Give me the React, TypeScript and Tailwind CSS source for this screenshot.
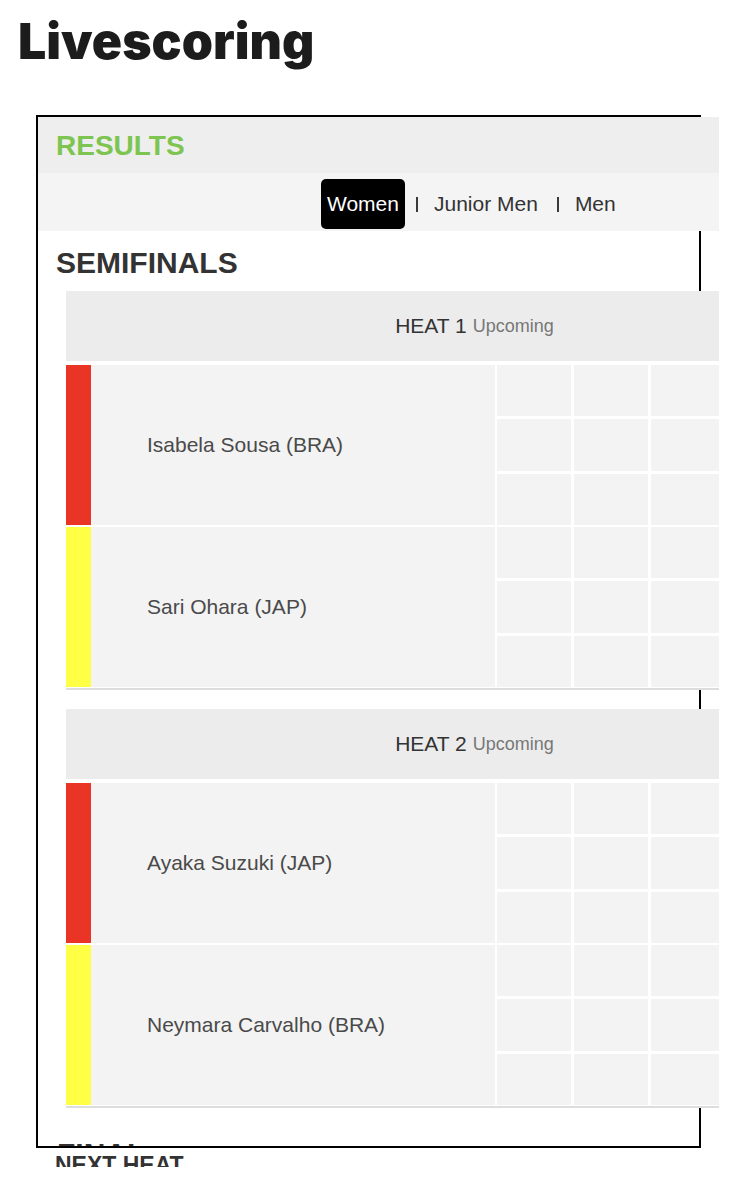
import React from "react";

type Rider = { name: string; color: string };
type Heat = { n: number; riders: Rider[] };

const heats: Heat[] = [
  {
    n: 1,
    riders: [
      { name: "Isabela Sousa (BRA)", color: "bg-[#ea3526]" },
      { name: "Sari Ohara (JAP)", color: "bg-[#ffff45]" },
    ],
  },
  {
    n: 2,
    riders: [
      { name: "Ayaka Suzuki (JAP)", color: "bg-[#ea3526]" },
      { name: "Neymara Carvalho (BRA)", color: "bg-[#ffff45]" },
    ],
  },
];

function RiderRow({ rider }: { rider: Rider }) {
  return (
    <div className="flex h-[160px] bg-white">
      <div className={`w-[25px] shrink-0 ${rider.color}`} />
      <div className="flex w-[404px] shrink-0 items-center bg-[#f3f3f3] pl-[56px] text-[21px] text-[#4a4a4a]">
        {rider.name}
      </div>
      <div className="ml-[2px] grid grid-cols-[repeat(5,74px)] grid-rows-3 gap-x-[3px] gap-y-[3px] bg-white">
        {Array.from({ length: 15 }).map((_, i) => (
          <div key={i} className="bg-[#f3f3f3]" />
        ))}
      </div>
    </div>
  );
}

function HeatCard({ heat }: { heat: Heat }) {
  return (
    <div className="ml-[28px] w-[817px] bg-white">
      <div className="flex h-[70px] items-center justify-center bg-[#ececec]">
        <span className="text-[21px] text-[#333333]">HEAT {heat.n}</span>
        <span className="ml-[6px] text-[18px] text-[#777777]">Upcoming</span>
      </div>
      <div className="mt-[4px] flex flex-col gap-[2px] bg-white">
        {heat.riders.map((r) => (
          <RiderRow key={r.name} rider={r} />
        ))}
      </div>
      <div className="mt-[1px] h-[2px] bg-[#dddddd]" />
    </div>
  );
}

export default function App() {
  return (
    <div
      className="min-h-[1200px] bg-white"
      style={{ fontFamily: '"Liberation Sans", Arial, sans-serif' }}
    >
      <h1
        className="pl-[18px] pt-[16px] text-[50px] leading-none font-black text-[#1c1c1c]"
        style={{ fontFamily: 'Inter, "Noto Sans", sans-serif' }}
      >
        Livescoring
      </h1>

      <div className="ml-[36px] mt-[49px] w-[683px] overflow-hidden">
        <div className="h-[1033px] w-[665px] border-2 border-black overflow-x-visible overflow-y-clip">
          <div className="w-[872px]">
            <div className="flex h-[56px] items-center bg-[#eeeeee] pl-[18px] pt-[2px]">
              <span className="text-[28px] font-bold text-[#7dc550]">RESULTS</span>
            </div>

            <div className="flex h-[58px] items-start bg-[#f4f4f4] pl-[283px] pt-[6px]">
              <div className="flex items-center">
                <span className="flex h-[50px] items-center rounded-[5px] bg-black px-[6px] text-[21px] text-white">
                  Women
                </span>
                <span className="ml-[11px] h-[15px] w-[2px] bg-[#3a3a3a]" />
                <span className="ml-[16px] text-[21px] text-[#333333]">Junior Men</span>
                <span className="ml-[19px] h-[15px] w-[2px] bg-[#3a3a3a]" />
                <span className="ml-[16px] text-[21px] text-[#333333]">Men</span>
              </div>
            </div>

            <h2 className="mt-[17px] pl-[18px] text-[30px] leading-none font-bold text-[#333333]">
              SEMIFINALS
            </h2>

            <div className="mt-[13px] flex flex-col gap-[19px]">
              {heats.map((h) => (
                <HeatCard key={h.n} heat={h} />
              ))}
            </div>

            <h2 className="mt-[31px] pl-[19px] text-[30px] leading-none font-bold text-[#333333]">
              FINAL
            </h2>
          </div>
        </div>
      </div>

      <div className="h-[19px] overflow-hidden pl-[55px] pt-[6px]">
        <div className="text-[23px] leading-none font-bold text-[#333333]">NEXT HEAT</div>
      </div>
    </div>
  );
}
